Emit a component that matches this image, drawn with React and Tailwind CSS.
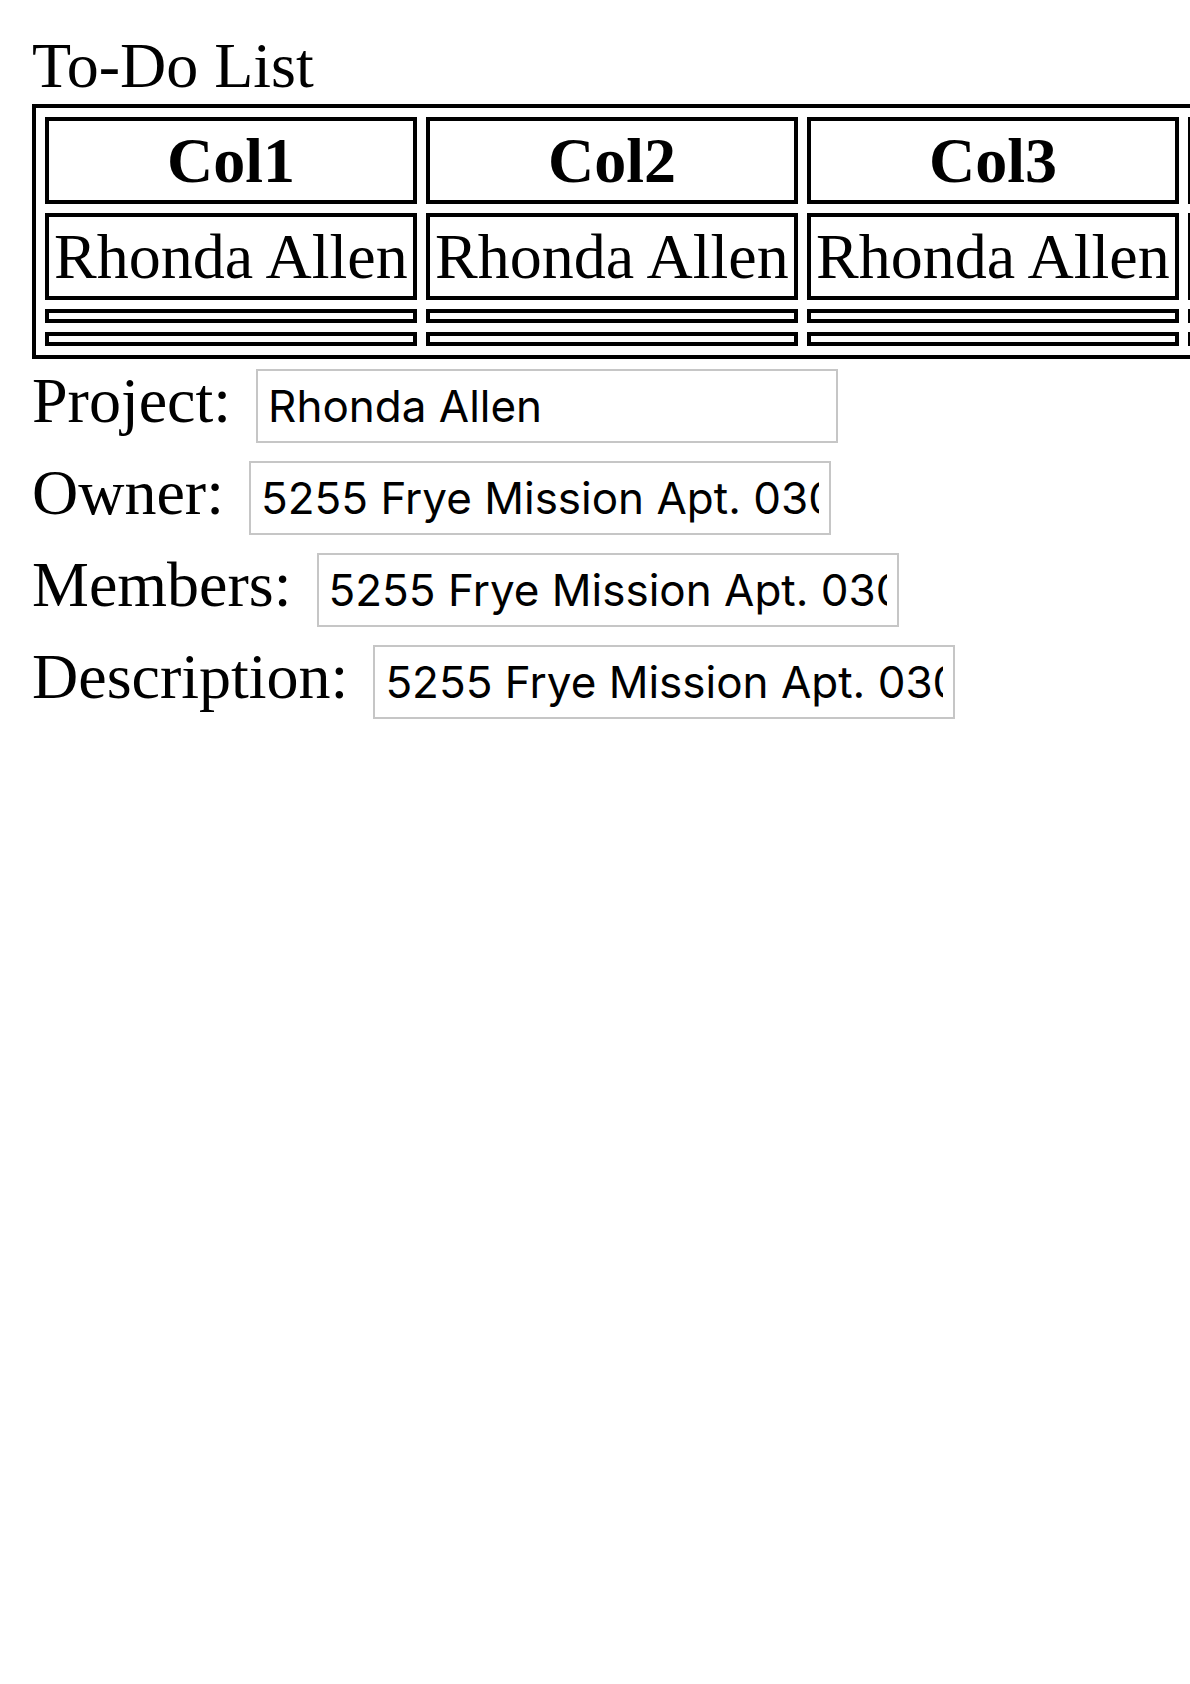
const COLS = ["Col1", "Col2", "Col3", "Col4"];

const FIELDS = [
  { label: "Project:", value: "Rhonda Allen" },
  { label: "Owner:", value: "5255 Frye Mission Apt. 030" },
  { label: "Members:", value: "5255 Frye Mission Apt. 030" },
  { label: "Description:", value: "5255 Frye Mission Apt. 030" },
];

export default function App() {
  return (
    <div className="w-[1190px] min-h-[1684px] overflow-hidden bg-white pl-[32px] pt-[28px] font-['Liberation_Serif',serif] text-[64px] text-black">
      <div className="leading-[76px]">To-Do List</div>

      {/* table */}
      <table className="border-separate border-spacing-[9px] border-4 border-black">
        <thead>
          <tr>
            {COLS.map((c) => (
              <th key={c} className="border-4 border-black p-0">
                <div className="w-[364px] h-[79px] leading-[79px] text-center font-bold">{c}</div>
              </th>
            ))}
          </tr>
        </thead>
        <tbody>
          <tr>
            {COLS.map((c) => (
              <td key={c} className="border-4 border-black p-0">
                <div className="w-[364px] h-[79px] leading-[79px] pl-[5px] whitespace-nowrap">Rhonda Allen</div>
              </td>
            ))}
          </tr>
          {[0, 1].map((r) => (
            <tr key={r}>
              {COLS.map((c) => (
                <td key={c} className="border-4 border-black p-0">
                  <div className="w-[364px] h-[6px]" />
                </td>
              ))}
            </tr>
          ))}
        </tbody>
      </table>

      {/* form */}
      <div className="mt-[10px] flex flex-col gap-[18px]">
        {FIELDS.map(({ label, value }) => (
          <div key={label} className="flex items-baseline">
            <span className="leading-none">{label}</span>
            <input
              readOnly
              value={value}
              className="ml-[25px] w-[582px] h-[74px] border-2 border-[#c6c6c6] px-[10px] font-['Inter',sans-serif] text-[44px] text-black outline-none"
            />
          </div>
        ))}
      </div>
    </div>
  );
}
